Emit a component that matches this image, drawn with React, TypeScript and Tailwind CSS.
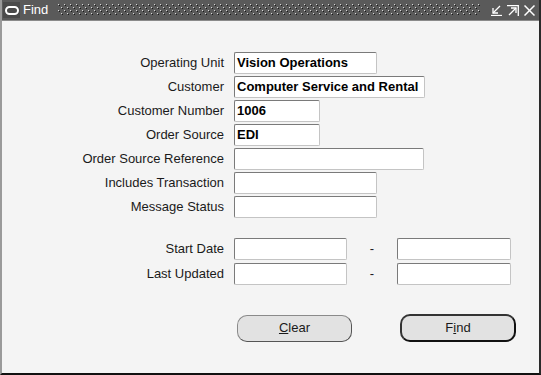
import React from 'react'

const font = { fontFamily: '"Liberation Sans", Arial, sans-serif' }

interface FieldProps {
  label: string
  value?: string
  width: string
}

const Input: React.FC<{ value?: string; className: string }> = ({ value, className }) => (
  <div
    className={`h-[22px] rounded-[2px] border border-t-[#7a7a7a] border-l-[#7a7a7a] border-r-[#c4c4c4] border-b-[#c4c4c4] bg-white pl-[2px] text-[13px] leading-[20px] font-bold text-black whitespace-nowrap overflow-hidden ${className}`}
  >
    {value}
  </div>
)

const Field: React.FC<FieldProps> = ({ label, value, width }) => (
  <div className="flex h-[22px] items-center">
    <div className="w-[223px] pr-[1px] text-right text-[13px] text-[#1a1a1a]">{label}</div>
    <div className="ml-[9px]">
      <Input value={value} className={width} />
    </div>
  </div>
)

const DateRow: React.FC<{ label: string }> = ({ label }) => (
  <div className="flex h-[22px] items-center">
    <div className="w-[223px] pr-[1px] text-right text-[13px] text-[#1a1a1a]">{label}</div>
    <div className="ml-[9px]">
      <Input className="w-[113px]" />
    </div>
    <div className="w-[50px] text-center text-[13px] text-[#1a1a1a]">-</div>
    <Input className="w-[114px]" />
  </div>
)

const TitleBar = () => (
  <div className="flex h-[21px] items-center border-b border-b-[#8a8a8a] bg-[#5a5a5a]">
    <div className="ml-[1px] flex h-[16px] w-[17px] items-center justify-center bg-[#4a4a4a]">
      <div className="h-[9px] w-[14px] rounded-full border-2 border-white" />
    </div>
    <span className="ml-[3px] text-[13px] text-white">Find</span>
    <svg className="ml-[10px] h-[12px] w-[422px]" viewBox="0 0 422 12">
      <defs>
        <pattern id="dots" width="6" height="6" patternUnits="userSpaceOnUse">
          <rect x="0" y="0" width="1" height="1" fill="#d8d8d8" />
          <rect x="1" y="1" width="1" height="1" fill="#1a1a1a" />
          <rect x="3" y="3" width="1" height="1" fill="#d8d8d8" />
          <rect x="4" y="4" width="1" height="1" fill="#1a1a1a" />
        </pattern>
      </defs>
      <rect x="0" y="0" width="422" height="12" fill="url(#dots)" />
    </svg>
    <div className="ml-auto mr-[4px] flex items-center gap-[5px]">
      <svg width="11" height="11" viewBox="0 0 11 11" fill="none" stroke="white" strokeWidth="1.3">
        <path d="M9 1 L2 8" />
        <path d="M2 3 V8 H7" />
        <path d="M0 10.5 H11" />
      </svg>
      <svg width="12" height="11" viewBox="0 0 12 11" fill="none" stroke="white" strokeWidth="1.3">
        <path d="M0 0.7 H11.3 V11" />
        <path d="M2 10 L9 3" />
        <path d="M4 3 H9 V8" />
      </svg>
      <svg width="11" height="11" viewBox="0 0 11 11" fill="none" stroke="white" strokeWidth="1.5">
        <path d="M0.5 0.5 L10.5 10.5" />
        <path d="M10.5 0.5 L0.5 10.5" />
      </svg>
    </div>
  </div>
)

export default function App() {
  return (
    <div className="h-[375px] w-[541px] bg-white" style={font}>
      <div className="flex h-[375px] w-[541px] flex-col border-l-2 border-l-[#9a9a9a] border-r-2 border-r-[#2a2a2a] border-b-2 border-b-[#111] bg-[#f4f4f4]">
        <TitleBar />
        <div className="flex flex-col gap-[2px] pt-[31px]">
          <Field label="Operating Unit" value="Vision Operations" width="w-[143px]" />
          <Field label="Customer" value="Computer Service and Rental" width="w-[191px]" />
          <Field label="Customer Number" value="1006" width="w-[86px]" />
          <Field label="Order Source" value="EDI" width="w-[86px]" />
          <Field label="Order Source Reference" width="w-[190px]" />
          <Field label="Includes Transaction" width="w-[143px]" />
          <Field label="Message Status" width="w-[143px]" />
        </div>
        <div className="mt-[20px] flex flex-col gap-[3px]">
          <DateRow label="Start Date" />
          <DateRow label="Last Updated" />
        </div>
        <div className="mt-[29px] flex items-center">
          <button className="ml-[235px] h-[27px] w-[115px] rounded-[10px] border border-[#8a8a8a] border-b-[#555] border-r-[#555] bg-[#e2e2e2] text-[13px] text-[#1a1a1a]">
            <span className="underline">C</span>lear
          </button>
          <button className="ml-[48px] h-[28px] w-[116px] rounded-[10px] border-2 border-[#333] border-b-[#111] border-r-[#111] bg-[#e2e2e2] text-[13px] text-[#1a1a1a]">
            F<span className="underline">i</span>nd
          </button>
        </div>
      </div>
    </div>
  )
}
